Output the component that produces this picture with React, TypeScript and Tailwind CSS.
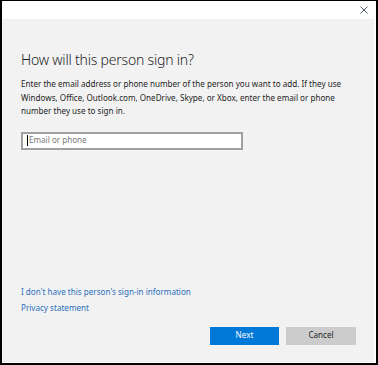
export default function App() {
  return (
    <div
      className="w-[378px] h-[365px] border-t border-l-2 border-r-2 border-b-2 border-black bg-white flex flex-col"
      style={{ fontFamily: '"Noto Sans", "Open Sans", sans-serif' }}
    >
      <div className="h-[18px] flex items-center justify-end pr-[8px] shrink-0">
        <svg width="8" height="8" viewBox="0 0 8 8" className="text-gray-700">
          <path d="M0.5 0.5 L7.5 7.5 M7.5 0.5 L0.5 7.5" stroke="currentColor" strokeWidth="0.9" />
        </svg>
      </div>
      <div className="flex-1 bg-[#f2f2f2] mr-[2px] mb-[1px] flex flex-col pl-[19px] pr-[14px]">
        <h1 className="mt-[31px] text-[14px] font-light text-[#1f1f1f] leading-[20px] tracking-[-0.2px]">
          How will this person sign in?
        </h1>
        <p className="mt-[7px] text-[8.1px] leading-[13.5px] text-[#1f1f1f]">
          Enter the email address or phone number of the person you want to add. If they use Windows, Office,
          Outlook.com, OneDrive, Skype, or Xbox, enter the email or phone number they use to sign in.
        </p>
        <div className="mt-[14px] w-[222px] h-[18px] bg-white border-2 border-[#a0a0a0] flex items-center pl-[4px]">
          <span className="w-px h-[11px] bg-black mr-px" />
          <span className="text-[8.1px] text-[#7a7a7a]">Email or phone</span>
        </div>
        <div className="mt-[136px] flex flex-col gap-[4px] text-[8.1px] text-[#2b6fc0] leading-[12px]">
          <span>I don't have this person's sign-in information</span>
          <span>Privacy statement</span>
        </div>
        <div className="mt-[13px] flex justify-end gap-[7px] pr-[4px]">
          <button className="w-[69px] h-[18px] bg-[#0078d7] text-white text-[8.1px]">Next</button>
          <button className="w-[70px] h-[18px] bg-[#cccccc] text-[#1f1f1f] text-[8.1px]">Cancel</button>
        </div>
      </div>
    </div>
  )
}
